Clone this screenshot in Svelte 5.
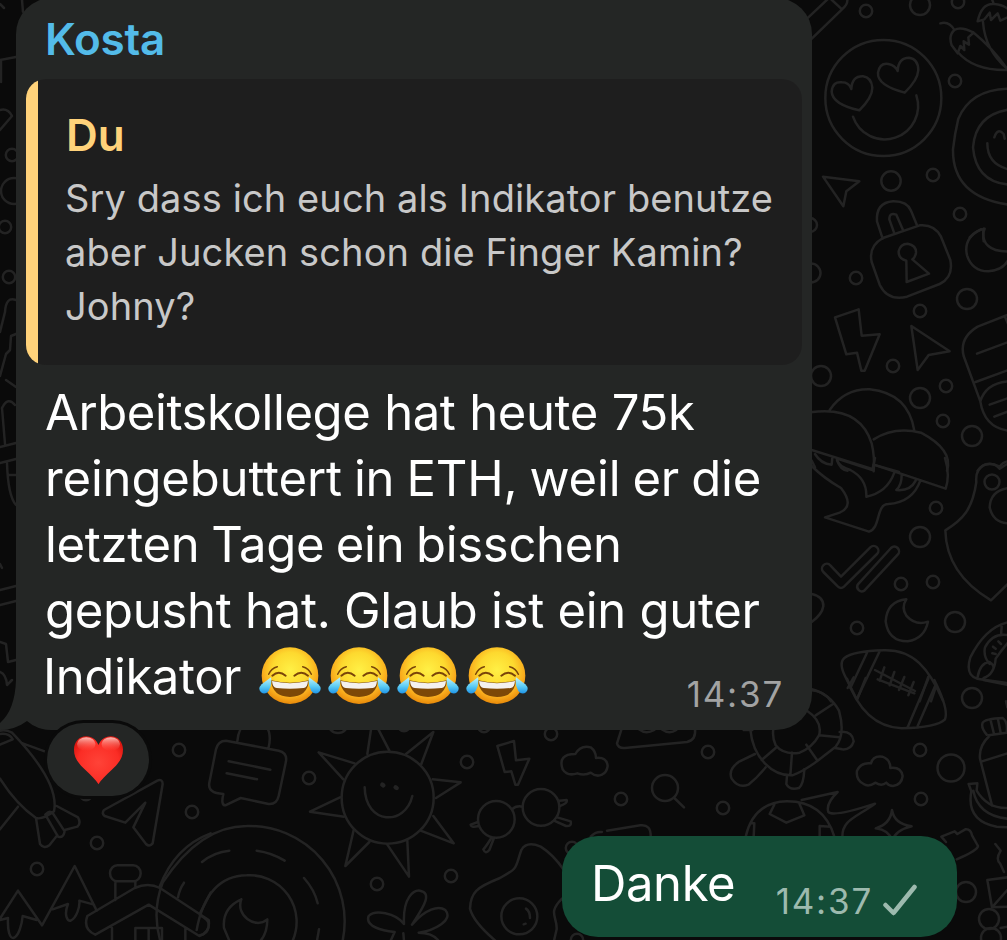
<script lang="ts">
	type Line = { text: string; tracking: number; gap: number };

	const quoteLines: string[] = [
		'Sry dass ich euch als Indikator benutze',
		'aber Jucken schon die Finger Kamin?',
		'Johny?'
	];

	const bodyLines: Line[] = [
		{ text: 'Arbeitskollege hat heute 75k', tracking: -0.4, gap: 0.4 },
		{ text: 'reingebuttert in ETH, weil er die', tracking: -0.15, gap: -1.6 },
		{ text: 'letzten Tage ein bisschen', tracking: -0.3, gap: -1.8 },
		{ text: 'gepusht hat. Glaub ist ein guter', tracking: -0.28, gap: 0 }
	];

	// Small bubbles scattered between the doodles: [x, y, radius]
	const dots: number[][] = [
		[866, 11, 6.2], [920, 5, 10], [958, 2, 6.2], [955, 81, 6.2], [891, 181, 9.7],
		[933, 175, 6.2], [960, 214, 6.2], [810, 225, 7], [811, 273, 9.5], [856, 278, 6.2],
		[920, 311, 6.2], [967, 299, 10], [893, 366, 6.2], [821, 376, 10], [920, 398, 10],
		[946, 386, 6.2], [943, 421, 6.2], [972, 436, 10], [936, 508, 6.2], [920, 537, 10],
		[901, 584, 6.2], [933, 582, 6.2], [857, 628, 6.2], [955, 622, 10], [992, 482, 7.5],
		[972, 698, 10], [708, 752, 6.2], [621, 799, 6.2], [723, 808, 6.2], [920, 750, 6.2],
		[921, 799, 6.2], [951, 768, 13.5], [309, 778, 6.2], [467, 762, 6.2], [377, 884, 6.2],
		[451, 876, 6.2], [551, 734, 6.2], [338, 723, 10], [404, 725, 6.2], [484, 726, 6.2],
		[572, 848, 6.2], [577, 940, 6.2], [179, 750, 6.2], [192, 812, 6.2], [97, 843, 6.2],
		[37, 869, 6.2], [86, 794, 6.2], [12, 155, 6.2], [14, 191, 13], [5, 227, 6.2],
		[9, 277, 6.2], [966, 892, 10], [989, 919, 10], [991, 938, 10]
	];
</script>

{#snippet Joy()}
	<svg class="joy" viewBox="58 44 186 186" role="img" aria-label="Tränen lachendes Gesicht">
		<circle cx="151" cy="136" r="85" fill="url(#face)" />
		<g fill="none" stroke="#7a4509" stroke-linecap="round" stroke-width="6">
			<path d="M87 132Q95 113 113 109M189 109Q207 113 215 132" stroke-width="4.5" />
			<path d="M98 136Q117 119 138 136M164 136Q185 119 205 136" />
		</g>
		<path d="M94 150Q151 164 208 150Q204 199 151 200Q98 199 94 150Z" fill="#7d4807" />
		<path d="M97 152Q151 165 205 152Q203 174 191 173Q151 178 111 173Q99 173 97 152Z" fill="#f4f1ee" />
		<path d="M94 141Q98 164 87 182Q76 195 64 186Q53 175 66 162Z" fill="url(#tear)" />
		<path d="M208 141Q204 164 215 182Q226 195 238 186Q249 175 236 162Z" fill="url(#tear)" />
	</svg>
{/snippet}

<main class="chat">
	<svg class="wallpaper" viewBox="0 0 1007 940" width="1007" height="940" aria-hidden="true">
		<defs>
			<radialGradient id="face" cx="0.5" cy="0.4" r="0.62">
				<stop offset="0" stop-color="#fff045" />
				<stop offset="0.5" stop-color="#fdd92f" />
				<stop offset="0.78" stop-color="#f9ac1d" />
				<stop offset="1" stop-color="#e58306" />
			</radialGradient>
			<linearGradient id="tear" x1="0" y1="0" x2="0" y2="1">
				<stop offset="0" stop-color="#c4f4fb" />
				<stop offset="0.55" stop-color="#5dcdf5" />
				<stop offset="1" stop-color="#1e94e8" />
			</linearGradient>
		</defs>

		{#each dots as [cx, cy, r]}
			<circle {cx} {cy} {r} />
		{/each}

		<!-- Right edge, top: pencil, chilis, heart eyes, donut, arrow, padlock -->
		<g class="tile" transform="translate(807 0) scale(0.33333)">
			<path d="M0 56L70 -10M12 118L105 28Q122 14 121 0M66 -8L105 28" />
			<path d="M400 70Q426 62 442 90M442 90Q462 78 500 98Q555 142 600 206M442 90Q424 106 434 136L452 160L460 138L472 150L470 124L486 134L484 112L500 98M452 156Q500 212 600 210M512 64Q524 8 562 12Q590 14 606 30M512 64L532 58L548 38L552 60L572 40L580 62L606 50M528 66Q534 150 600 206M560 12Q556 -4 546 -14" />
			<circle cx="229" cy="294" r="174" />
			<path d="M157 331Q76 313 74 275Q77 243 105 247Q126 247 133 267Q135 228 168 229Q193 232 196 263Q196 292 157 331ZM293 278Q210 256 213 218Q218 188 244 192Q265 196 272 213Q274 173 306 173Q333 176 334 210Q332 241 293 278Z" />
			<path d="M138 350A98 98 0 1 0 328 286" />
			<path d="M610 266Q492 266 454 356Q443 402 438 448Q436 590 606 614M610 328Q506 342 498 442Q507 548 610 554M541 430Q541 492 604 508M562 412Q572 382 590 402L593 416" />
			<path d="M48 530L157 544L118 574L109 619Z" />
			<path d="M227 716L210 664Q206 608 258 604Q300 603 312 632L330 676M262 700L247 658Q247 636 268 644L288 690" />
			<path d="M488 712Q508 690 533 686Q526 704 530 724" />
		</g>

		<!-- Right edge, middle: padlock body, moon, bolt, arrow, scroll, balloons -->
		<g class="tile" transform="translate(807 230) scale(0.33333)">
			<path d="M228 24L338 -14Q382 -18 402 20L430 90Q440 142 398 162L300 200Q242 214 218 164L194 96Q184 48 228 24Z" />
			<path d="M298 92Q274 86 275 64Q280 41 302 41Q328 46 327 68Q324 84 316 88L366 131L299 156Z" />
			<path d="M522 -2Q468 24 480 76Q496 124 544 124Q590 120 606 86M530 -4Q518 64 606 65" />
			<path d="M84 262L155 238L164 317L218 313L173 422L163 422L150 368L118 373Z" />
			<path d="M313 288L428 364L365 375L332 420Z" />
			<path d="M604 254L512 290Q456 324 470 378L520 514Q532 592 604 602M594 260L604 284M510 371L604 336M506 456L604 420M520 514Q536 460 604 454M548 524L604 504M562 560L604 544" />
			<path d="M68 540Q112 476 188 478Q304 490 322 602M10 547Q158 526 194 640Q204 684 200 724M200 628Q262 588 342 608Q440 660 420 722" />
			<path d="M14 660L200 718M24 672Q42 702 74 704L76 684M90 690Q100 720 122 722M200 704L276 726M14 692L24 712M512 722Q536 688 578 710Q590 694 606 694" />
		</g>

		<!-- Right edge, lower: balloons, double check, moon, shield, football, sneaker -->
		<g class="tile" transform="translate(807 460) scale(0.33333)">
			<path d="M90 -4L196 30L204 -6M200 14L416 86Q430 44 414 -6M14 18Q50 54 102 84Q144 138 98 158L54 172L186 215C222 204 206 132 244 132Q316 128 340 62M90 0Q94 18 130 30Q180 56 178 110Q240 98 262 38M284 46Q284 76 268 90Q310 94 326 62" />
			<path d="M102 350L190 262A14 14 0 0 1 210 282L111 380Q102 388 93 380L49 336A14 14 0 0 1 70 316ZM152 374L252 264A14 14 0 0 1 272 284L172 392A14 14 0 0 1 152 374Z" />
			<path d="M298 418Q240 424 236 484Q244 544 302 544Q352 536 363 485Q325 498 298 467Q282 442 298 418Z" />
			<path d="M604 10L578 26Q562 6 534 14Q504 28 508 66C496 150 466 180 415 211Q418 342 552 421L604 370M604 84Q550 92 548 142Q558 188 604 190" />
			<path d="M14 402Q50 410 49 438Q46 462 14 486M10 690Q50 692 72 724" />
			<path d="M148 716L116 652Q94 610 112 594Q138 574 230 571C320 568 366 626 408 722M180 578L130 684M218 574L150 716M364 650L338 724M386 682L372 724" />
			<path d="M204 630L324 693M232 622L218 662M262 636L248 676M292 651L276 690M320 666L304 706" />
			<path d="M606 486Q536 500 490 592Q474 644 510 656L604 670M584 500L582 526M606 526Q558 516 534 562Q528 590 548 612M606 544Q582 572 566 596Q562 644 530 654M512 650Q520 608 548 606Q566 618 556 632M558 560L566 566M574 544L582 552M556 580L566 582" />
		</g>

		<!-- Below the message: dice, search, turtle, cloud, soccer ball, bottle -->
		<g class="tile" transform="translate(607 680) scale(0.33333)">
			<path d="M44 146L30 190Q34 206 54 204L240 186Q268 180 264 146M96 148Q116 164 142 150M164 148Q186 164 208 150" />
			<circle cx="174" cy="324" r="39" />
			<path d="M202 354L231 382M0 452L100 436Q132 432 131 470" />
			<path d="M430 148C438 236 498 288 556 286Q586 276 630 244L686 200Q716 164 696 92Q668 40 610 26M600 92Q648 124 636 166Q616 202 578 218Q530 226 506 196Q494 168 500 144M410 150L436 150M626 106L678 72M636 166L698 172M598 194L630 240M555 218L550 286M506 204L464 240" />
			<path d="M698 156Q736 152 740 184Q732 210 706 208L684 204M444 222L398 244Q362 268 374 296Q394 326 424 314Q450 294 476 262M540 288L538 312Q548 332 576 324Q590 312 592 268" />
			<path d="M770 312Q746 300 750 272Q762 246 792 250Q798 226 826 230Q850 238 850 264Q882 260 887 288Q884 314 858 318Q846 318 838 308Q824 320 806 308Q784 322 770 312Z" />
			<path d="M416 470Q440 366 540 364Q650 364 682 470M502 374L488 402L538 428L592 406L576 368M430 430L442 430L440 470M638 470L638 438L670 440M584 360Q630 350 692 336Q656 370 664 396Q680 412 804 371C744 414 706 420 706 470" />
			<path d="M855 390Q862 432 914 439Q866 450 856 482Q846 450 806 445Q850 432 855 390Z" />
			<path d="M720 -4Q770 140 884 145Q990 142 1014 118Q1026 88 982 0M722 24L740 -8M750 60L776 -6M902 142L964 -4M932 138L986 14M1130 0L1200 14" />
			<path d="M812 -2L922 40" />
		</g>

		<!-- Bottom right corner: bottle, banana, puzzle, shapes -->
		<g class="tile" transform="translate(900 690) scale(0.33333)">
			<path d="M260 134Q242 112 248 98Q256 86 308 84Q324 94 320 128L266 136M272 92L282 132M294 88L302 128M268 138Q236 168 240 206L276 346M246 214L322 190" />
			<path d="M206 282L232 280L230 302Q262 356 322 354M206 282L214 304Q198 392 290 410L322 412M220 302Q234 376 322 386" />
			<path d="M138 456L124 440L164 424L172 432L196 418Q212 416 216 436L234 468Q232 482 170 508" />
			<path d="M286 462L302 482Q286 508 300 520L312 546M322 562L262 570L276 652L322 600M276 652L322 650M302 714L322 710M318 34L322 52" />
		</g>

		<!-- Bottom centre: note, sun, bolt, cloud, glasses, vinyl, butterfly, egg -->
		<g class="tile" transform="translate(200 720) scale(0.33333)">
			<path d="M78 62L236 92Q262 98 258 124L236 228Q230 254 206 252L122 234L76 256Q62 256 70 222Q22 220 28 188L48 88Q54 62 78 62ZM112 64Q116 22 136 14M196 14Q216 40 206 82M86 124L211 149M80 160L171 178" />
			<circle cx="563" cy="233" r="138" />
			<path d="M502 102L514 22M532 22L568 92M618 102L700 36L664 132M698 178L782 187L708 234M700 288L761 370L662 332M622 362L627 470L562 374M508 366L436 438L461 330M432 290L330 275L420 232M430 178L356 97L464 130" />
			<path d="M494 202C496 316 616 318 637 228" />
			<path d="M547 194L550 196M587 202L590 204" stroke-width="4.5" />
			<path d="M892 78L942 63L948 121L988 116L954 194L946 194L934 154L914 156Z" />
			<path d="M1206 164Q1188 172 1172 158Q1154 168 1132 160Q1102 170 1088 148Q1072 102 1126 102Q1142 74 1172 82Q1188 94 1188 114Q1220 110 1223 138Q1220 158 1206 164Z" />
			<circle cx="889" cy="298" r="55" />
			<circle cx="1023" cy="262" r="55" />
			<path d="M936 268Q948 256 968 260M834 306L812 314Q814 324 836 318M874 354Q858 380 850 388Q856 404 868 390L882 354M1078 242L1100 240Q1104 250 1080 258M1072 292L1112 304Q1116 320 1098 318L1062 302" />
			<path d="M-120 660A276 276 0 0 1 -112 488Q0 318 140 318A286 286 0 0 1 428 662M-10 630Q20 468 140 466A140 140 0 0 1 278 662M6 426Q42 396 88 392M170 392Q216 398 254 422M312 474Q344 510 353 550M357 628L351 662" />
			<path d="M124 538Q66 564 72 624L88 662M124 538C106 584 164 630 202 598Q202 638 182 662M0 586Q30 600 26 620Q22 642 0 646" />
			<path d="M612 612C608 530 642 510 660 512C702 520 662 572 636 614C676 566 716 556 736 570C762 600 704 632 656 638Q696 638 714 660M612 612C586 578 524 568 506 588C494 620 548 632 584 636L572 662M610 640L612 662" />
			<path d="M1090 448Q1060 404 1022 380Q980 362 964 390C944 446 958 442 900 474C830 502 812 516 810 566Q820 606 886 662M1086 536C1042 580 1072 588 1070 628L1062 662" />
			<circle cx="958" cy="589" r="54" />
			<path d="M978 566Q990 574 990 594M971 613L977 611M1172 350Q1186 334 1206 336" />
		</g>

		<!-- Bottom left: candy, paper plane, trees, house -->
		<g class="tile" transform="translate(0 700) scale(0.33333)">
			<path d="M0 236Q48 312 108 354Q128 360 162 334Q180 248 36 98Q18 88 0 92M0 102Q28 98 38 118L0 134M68 130L134 154M0 388L54 320M108 354L120 432Q132 448 148 436L172 406M170 318L234 352Q244 370 232 380L194 390M136 344Q150 328 160 342L194 394Q190 416 174 410Z" />
			<path d="M312 330L472 242Q488 236 488 252L458 430Q448 442 438 432L400 382L436 308L376 368L314 348Q304 340 312 330Z" />
			<path d="M0 656L54 572L126 676L224 498L290 632M0 660L24 654C22 696 30 714 40 714C56 710 66 672 68 648L110 660M158 628L204 612C190 648 204 664 212 662C230 654 240 620 238 602L282 614" />
			<path d="M404 564L262 648Q248 688 286 704L446 614L598 708Q632 696 626 660L480 564Q444 546 404 564ZM346 600L346 548M406 562L406 546M352 496H400A22 24 0 0 1 400 544H352A22 24 0 0 1 352 496ZM336 684V724M556 684V724M406 724V684H486V724M446 684V724" />
			<path d="M478 562Q524 440 632 400M552 548Q538 568 534 592M600 640L632 578" />
		</g>

		<!-- Slivers visible left of the message -->
		<g class="tile">
			<path d="M22 0L23 12M0 4L4 8M0 60L16 57M1 60V82M0 110Q8 108 12 116L0 130M16 300Q6 296 5 312L0 332M16 334L11 336L10 350L6 354L0 376" />
			<path d="M6 380L16 387M5 444L2 408Q8 396 15 405M0 447L16 443M0 463L16 459M7 463Q8 496 16 505M9 475H16M0 590L16 586M0 605L16 601M0 642L6 644L8 662L16 660M0 672Q6 674 7 685L12 680M0 564L2 568" />
		</g>
	</svg>

	<div class="messages">
		<section class="incoming">
			<div class="bubble">
				<svg class="tail" viewBox="0 0 52 50" aria-hidden="true">
					<path d="M16 0Q15 30 0 43V50Q15 50 27 41Q37 50 52 50V0Z" fill="#242625" />
				</svg>
				<div class="sender">Kosta</div>
				<div class="quote">
					<div class="quote-name">Du</div>
					{#each quoteLines as line}
						<p class="quote-line">{line}</p>
					{/each}
				</div>
				{#each bodyLines as line}
					<p class="line" style="letter-spacing: {line.tracking}px; word-spacing: {line.gap}px">
						{line.text}
					</p>
				{/each}
				<div class="last">
					<p class="line">Indikator</p>
					<div class="emojis">
						{#each [1, 2, 3, 4] as n (n)}
							{@render Joy()}
						{/each}
					</div>
					<span class="time">14:37</span>
				</div>
			</div>
			<div class="reaction">
				<svg class="heart" viewBox="216 105 154 150" role="img" aria-label="Rotes Herz">
					<defs>
						<radialGradient id="heart" cx="0.5" cy="0.55" r="0.6">
							<stop offset="0" stop-color="#ff4338" />
							<stop offset="0.7" stop-color="#fb2d25" />
							<stop offset="1" stop-color="#dd1710" />
						</radialGradient>
						<linearGradient id="shine" x1="0" y1="0" x2="0" y2="1">
							<stop offset="0" stop-color="#ffc9c2" stop-opacity="0.95" />
							<stop offset="1" stop-color="#ff5a4c" stop-opacity="0" />
						</linearGradient>
					</defs>
					<path
						d="M293 253C284 240 272 228 252 209C228 186 219 170 219 149C219 124 235 108 256 108C274 108 287 119 293 135C299 119 312 108 330 108C351 108 367 124 367 149C367 170 358 186 334 209C314 228 302 240 293 253Z"
						fill="url(#heart)"
					/>
					<ellipse cx="256" cy="132" rx="28" ry="21" fill="url(#shine)" />
					<ellipse cx="330" cy="132" rx="28" ry="21" fill="url(#shine)" />
				</svg>
			</div>
		</section>

		<section class="outgoing">
			<div class="bubble own">
				<p class="line">Danke</p>
				<span class="time">14:37</span>
				<svg class="check" viewBox="0 0 36 36" aria-hidden="true">
					<path d="M4.5 23L12.5 31L33.5 5" />
				</svg>
			</div>
		</section>
	</div>
</main>

<style>
	:global(body) {
		background: #0a0a0a;
	}

	.chat {
		display: grid;
		width: 1007px;
		height: 940px;
		overflow: hidden;
		font-family: Inter, 'Liberation Sans', sans-serif;
		color: #fff;
	}

	/* Wallpaper and messages share one grid cell */
	.wallpaper,
	.messages {
		grid-area: 1 / 1;
		min-width: 0;
	}

	.wallpaper {
		fill: none;
		stroke: #232323;
		stroke-width: 2.5;
		stroke-linecap: round;
		stroke-linejoin: round;
	}

	.tile path,
	.tile circle {
		vector-effect: non-scaling-stroke;
	}

	.messages {
		display: flex;
		flex-direction: column;
		gap: 40px;
	}

	p {
		margin: 0;
	}

	.bubble {
		position: relative;
		isolation: isolate;
		box-sizing: border-box;
		background: #242625;
		border-radius: 36px;
	}

	.incoming .bubble {
		width: 796px;
		height: 732px;
		margin: -2px 0 0 16px;
		padding: 11px 10px 20px;
	}

	.tail {
		position: absolute;
		z-index: -1;
		left: -16px;
		bottom: 0;
		width: 52px;
		height: 50px;
	}

	.sender,
	.quote-name {
		font-size: 44px;
		font-weight: 600;
		line-height: 60px;
	}

	.sender {
		padding-left: 19px;
		letter-spacing: -0.2px;
		color: #53bbe9;
	}

	.quote {
		margin: 10px 0 15px;
		padding: 26px 0 32px 28px;
		height: 286px;
		box-sizing: border-box;
		border-radius: 20px;
		background: linear-gradient(to right, #ffd27a 12px, #1e1e1e 12px);
	}

	.quote-name {
		margin: 0 0 6px;
		padding-left: 12px;
		color: #ffd27a;
	}

	.quote-line {
		padding-left: 11px;
		font-size: 38px;
		line-height: 54px;
		letter-spacing: 0.1px;
		white-space: nowrap;
		color: #c8c8c8;
	}

	.line {
		padding-left: 19px;
		font-size: 49px;
		line-height: 66px;
		letter-spacing: -0.4px;
		white-space: nowrap;
	}

	.last {
		display: flex;
	}

	.last .line {
		padding-left: 17px;
	}

	.emojis {
		display: flex;
		gap: 7px;
		margin: 1px 0 0 18px;
	}

	.joy {
		width: 62px;
		height: 62px;
	}

	.time {
		font-size: 35px;
		line-height: 40px;
		letter-spacing: 1.8px;
		color: #a2a3a3;
	}

	.last .time {
		align-self: flex-end;
		margin: 0 18px -4px auto;
	}

	/* Dark ring separates the pill from the bubble it overlaps */
	.reaction {
		position: relative;
		display: flex;
		align-items: center;
		justify-content: center;
		width: 102px;
		height: 73px;
		margin: -7px 0 0 47px;
		border-radius: 37px;
		background: #242625;
		box-shadow: 0 0 0 3px #0a0a0a;
	}

	.heart {
		width: 51px;
		height: 50px;
	}

	.outgoing {
		display: flex;
		justify-content: flex-end;
		padding-right: 50px;
	}

	.own {
		display: flex;
		align-items: flex-start;
		width: 395px;
		height: 101px;
		padding: 15px 40px 0 29px;
		background: #144d37;
	}

	.own .line {
		padding: 0;
	}

	.own .time {
		margin: 30px 0 0 auto;
		color: #9dbaae;
	}

	.check {
		width: 36px;
		height: 36px;
		margin: 31px 0 0 8px;
		fill: none;
		stroke: #9dbaae;
		stroke-width: 4.5;
		stroke-linecap: round;
		stroke-linejoin: round;
	}
</style>
